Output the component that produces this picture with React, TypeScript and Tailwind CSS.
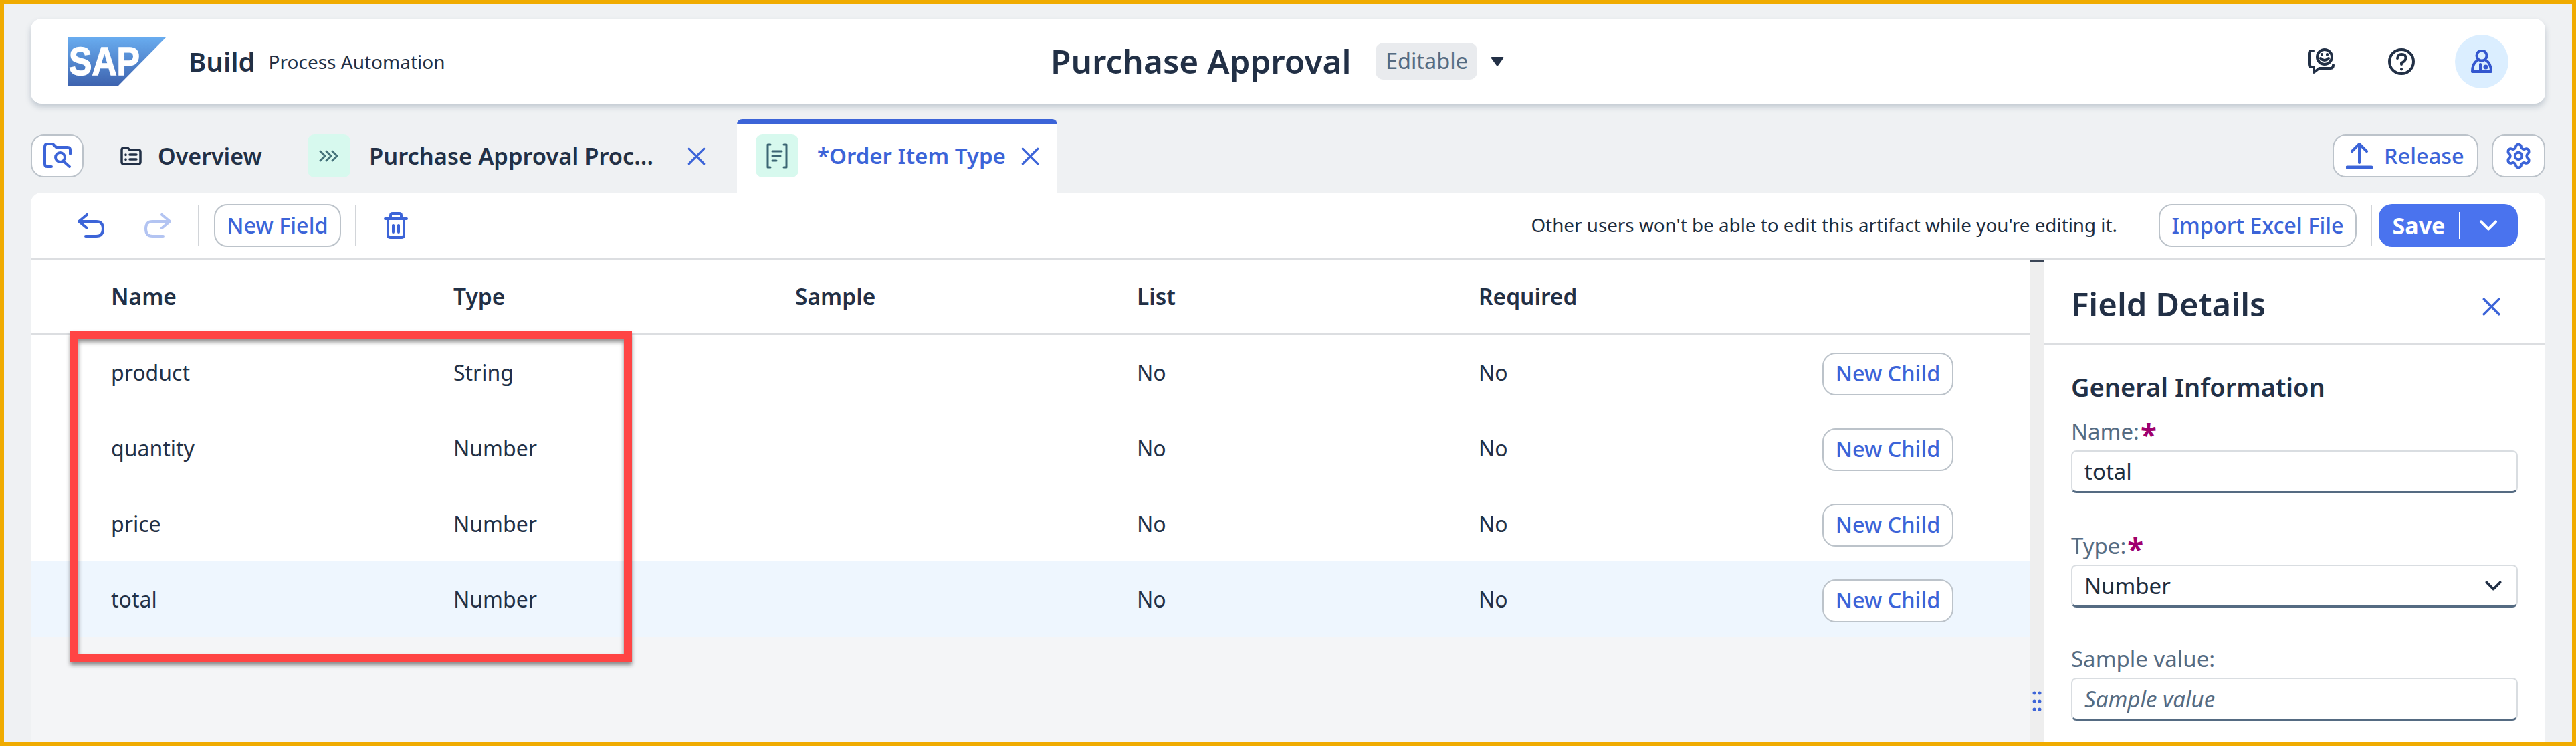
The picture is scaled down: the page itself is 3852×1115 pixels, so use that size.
import { X, ChevronDown, Settings } from 'lucide-react';
import { clsx } from 'clsx';

const rows = [
    { name: 'product', type: 'String' },
    { name: 'quantity', type: 'Number' },
    { name: 'price', type: 'Number' },
    { name: 'total', type: 'Number', selected: true },
];

const outlineBtn = "h-16 flex items-center justify-center bg-white border-2 border-[#bcc3ca] rounded-[20px] text-[#3c64d8] text-[32.500px] font-medium";
const rowGrid = "grid grid-cols-[512px_511px_511px_511px_514px_1fr] pl-[120px] items-center";

function SapLogo() {
    return (
        <svg width="148" height="74" viewBox="0 0 148 74" className="shrink-0">
            <defs>
                <linearGradient id="sapGrad" x1="0" y1="0" x2="0" y2="1">
                    <stop offset="0" stopColor="#69adf0" />
                    <stop offset="1" stopColor="#3d62ae" />
                </linearGradient>
            </defs>
            <polygon points="0,0 148,0 75,74 0,74" fill="url(#sapGrad)" />
            <text x="2" y="57" fontFamily="Liberation Sans, sans-serif" fontWeight="700" fontSize="60" fill="#fff" stroke="#fff" strokeWidth="1.500" textLength="106" lengthAdjust="spacingAndGlyphs">SAP</text>
        </svg>
    );
}

function Chip({ children }: { children: React.ReactNode }) {
    return <div className="w-16 h-16 rounded-[10px] bg-[#d7f9ee] flex items-center justify-center shrink-0">{children}</div>;
}

function Field({ label, required, children, className }: { label: string; required?: boolean; children: React.ReactNode; className?: string }) {
    return (
        <div className={className}>
            <div className="h-[36px] flex items-center text-[33px] text-[#556b82]">
                {label}
                {required && <span className="text-[#a0006e] font-bold text-[44px] leading-none mt-2 ml-0.5">*</span>}
            </div>
            <div className="mt-[10px] h-16 rounded-lg border-2 border-[#d9dde1] border-b-[3px] border-b-[#556b82] flex items-center justify-between px-[18px] text-[33px] text-[#1d2d3e]">
                {children}
            </div>
        </div>
    );
}

export default function App() {
    return (
        <div className="w-[3852px] h-[1115px] border-[6px] border-[#f0ab00] bg-[#eff1f3] px-10 pt-[22px] flex flex-col overflow-hidden relative text-[#223046]" style={{ fontFamily: '"Noto Sans", sans-serif' }}>

            {/* Shell bar */}
            <header className="h-[127px] shrink-0 bg-white rounded-2xl shadow-[0_5px_8px_rgba(85,107,130,0.3)] flex items-center pl-[55px] pr-[55px]">
                <div className="w-[1470px] shrink-0 flex items-center">
                    <SapLogo />
                    <span className="ml-[33px] text-[40px] font-semibold">Build</span>
                    <span className="ml-[20px] text-[28px]">Process Automation</span>
                </div>
                <span className="text-[49.500px] font-semibold whitespace-nowrap">Purchase Approval</span>
                <span className="ml-[37px] h-[55px] w-[152px] rounded-xl bg-[#e9ebee] text-[#556b82] text-[32.500px] flex items-center justify-center">Editable</span>
                <svg width="20" height="15" viewBox="0 0 20 15" className="ml-5"><path d="M2 1 H18 Q20 1 19 3 L11.500 13.500 Q10 15 8.500 13.500 L1 3 Q0 1 2 1 Z" fill="#223046" /></svg>
                <div className="ml-auto flex items-center">
                    <svg width="40" height="40" viewBox="0 0 40 40" fill="none" stroke="#223046" strokeWidth="4" strokeLinecap="round" strokeLinejoin="round">
                        <path d="M8 4 H5 Q2 4 2 8 V24 Q2 28 6 28 H9 V36 L17 30 H34 Q38 30 38 25" />
                        <circle cx="25" cy="13" r="11" />
                        <path d="M19 15 Q25 21 31 15" />
                        <path d="M21 9v1M29 9v1" />
                    </svg>
                    <svg width="40" height="40" viewBox="0 0 40 40" fill="none" stroke="#223046" strokeWidth="4" strokeLinecap="round" strokeLinejoin="round" className="ml-20">
                        <circle cx="20" cy="20" r="18" />
                        <path d="M14 15 Q15 9 20 9 Q27 9 26.500 15 Q26 19 20 22 V24" />
                        <path d="M20 31v.5" />
                    </svg>
                    <div className="w-20 h-20 rounded-full bg-[#dbeeff] flex items-center justify-center ml-[60px]">
                        <svg width="32" height="36" viewBox="0 0 32 36" fill="none" stroke="#3457cf" strokeWidth="4" strokeLinejoin="round" strokeLinecap="round">
                            <circle cx="16" cy="9" r="7.500" />
                            <path d="M10 16 Q2 20 2 33 H30 Q30 20 22 16" />
                            <path d="M14 22 V33" />
                            <circle cx="22" cy="26" r="1.500" fill="#3457cf" />
                        </svg>
                    </div>
                </div>
            </header>

            {/* Tab bar */}
            <div className="h-[133px] shrink-0 flex items-end">
                <div className="flex h-[87px] items-start w-full">
                    <button className="w-[79px] h-16 bg-white border-2 border-[#bcc3ca] rounded-[20px] flex items-center justify-center shrink-0">
                        <svg width="42" height="40" viewBox="0 0 42 40" fill="none" stroke="#3c64d8" strokeWidth="4" strokeLinecap="round" strokeLinejoin="round">
                            <path d="M12 36 H6 Q2 36 2 32 V6 Q2 2 6 2 H14 L19 7 H36 Q40 7 40 11 V17" />
                            <circle cx="25" cy="22" r="7" />
                            <path d="M30 28 L39 36" />
                        </svg>
                    </button>
                    <div className="ml-[55px] h-16 flex items-center shrink-0">
                        <svg width="32" height="28" viewBox="0 0 32 28" fill="none" stroke="#223046" strokeWidth="3.500" strokeLinecap="round" strokeLinejoin="round">
                            <path d="M2 5 Q2 2 5 2 H11 L14 5 H27 Q30 5 30 8 V23 Q30 26 27 26 H5 Q2 26 2 23 Z" />
                            <path d="M8 12v.5M8 19v.5M14 12H24M14 19H24" />
                        </svg>
                        <span className="ml-6 w-[156px] text-[34px] font-semibold whitespace-nowrap">Overview</span>
                    </div>
                    <div className="ml-[68px] h-16 flex items-center shrink-0">
                        <Chip>
                            <svg width="30" height="18" viewBox="0 0 30 18" fill="none" stroke="#44727a" strokeWidth="3" strokeLinecap="round" strokeLinejoin="round">
                                <path d="M2 2 L9 9 L2 16M11 2 L18 9 L11 16M20 2 L27 9 L20 16" />
                            </svg>
                        </Chip>
                        <span className="ml-[28px] w-[430px] text-[34.500px] font-semibold whitespace-nowrap">Purchase Approval Proc...</span>
                        <X size={45} strokeWidth={1.700} className="ml-[37px] text-[#3c64d8]" />
                    </div>
                    <div className="ml-[38px] -mt-[23px] h-[110px] w-[479px] bg-white border-t-8 border-[#3c64d8] rounded-t-lg pl-7 shrink-0">
                        <div className="mt-[15px] h-16 flex items-center">
                            <Chip>
                                <svg width="32" height="40" viewBox="0 0 32 40" fill="none" stroke="#3c6674" strokeWidth="3" strokeLinecap="round" strokeLinejoin="round">
                                    <path d="M6 3 H2 V37 H6M26 3 H30 V37 H26M9 13 H23M9 20 H21M9 27 H15" />
                                </svg>
                            </Chip>
                            <span className="ml-7 w-[278px] text-[33px] font-semibold text-[#3c64d8] whitespace-nowrap">*Order Item Type</span>
                            <X size={45} strokeWidth={1.700} className="ml-[18px] text-[#3c64d8]" />
                        </div>
                    </div>
                    <button className={clsx(outlineBtn, "ml-auto w-[218px] justify-start pl-[18px]")}>
                        <svg width="40" height="40" viewBox="0 0 40 40" fill="none" stroke="#3c64d8" strokeWidth="4" strokeLinecap="round" strokeLinejoin="round">
                            <path d="M20 2 V30M9 13 L20 2 L31 13" />
                            <path d="M2 37 H38" strokeWidth="5" />
                        </svg>
                        <span className="ml-[17px]">Release</span>
                    </button>
                    <button className={clsx(outlineBtn, "ml-5 w-20")}>
                        <Settings size={42} strokeWidth={2.200} />
                    </button>
                </div>
            </div>

            {/* Main panel */}
            <main className="flex-1 min-h-0 bg-white rounded-t-2xl flex flex-col">
                <div className="h-[100px] shrink-0 border-b-2 border-[#dcdee1] flex items-center pl-[70px] pr-[41px]">
                    <svg width="40" height="36" viewBox="0 0 40 36" fill="none" stroke="#3c64d8" strokeWidth="4" strokeLinecap="round" strokeLinejoin="round">
                        <path d="M14 2 L2 12 L14 22M3 12 H28 Q38 12 38 23 Q38 34 28 34 H12" />
                    </svg>
                    <svg width="40" height="36" viewBox="0 0 40 36" fill="none" stroke="#b3c4f2" strokeWidth="4" strokeLinecap="round" strokeLinejoin="round" className="ml-[60px]">
                        <path d="M26 2 L38 12 L26 22M37 12 H12 Q2 12 2 23 Q2 34 12 34 H28" />
                    </svg>
                    <div className="ml-10 w-0.5 h-[60px] bg-[#d2d5d9]" />
                    <button className={clsx(outlineBtn, "ml-[22px] w-[190px]")}>New Field</button>
                    <div className="ml-[21px] w-0.5 h-[60px] bg-[#d2d5d9]" />
                    <svg width="36" height="40" viewBox="0 0 36 40" fill="none" stroke="#3c64d8" strokeWidth="4" strokeLinecap="round" strokeLinejoin="round" className="ml-[41px]">
                        <path d="M2 10 H34M10 10 V5 Q10 2 13 2 H23 Q26 2 26 5 V10M6 10 V34 Q6 38 10 38 H26 Q30 38 30 34 V10M14 20 V30M22 20 V30" />
                    </svg>
                    <span className="ml-auto text-[27.800px] text-[#1d2d3e]">Other users won't be able to edit this artifact while you're editing it.</span>
                    <button className={clsx(outlineBtn, "ml-[62px] w-[296px]")}>Import Excel File</button>
                    <div className="ml-[21px] w-0.5 h-[60px] bg-[#d2d5d9]" />
                    <div className="ml-[10px] w-[208px] h-16 rounded-[20px] bg-[#4a73ee] flex items-center text-white text-[34px] font-bold">
                        <span className="w-[120px] text-center">Save</span>
                        <div className="w-0.5 h-10 bg-white" />
                        <ChevronDown size={44} strokeWidth={2.200} className="ml-5" />
                    </div>
                </div>

                <div className="flex-1 min-h-0 flex">
                    {/* Field table */}
                    <div className="flex-1 min-w-0 bg-[#f4f5f7] flex flex-col">
                        <div className={clsx(rowGrid, "h-[112px] shrink-0 bg-white border-b-2 border-[#dcdee1] text-[33.500px] font-semibold")}>
                            <span>Name</span>
                            <span>Type</span>
                            <span>Sample</span>
                            <span>List</span>
                            <span>Required</span>
                        </div>
                        {rows.map(row => (
                            <div key={row.name} className={clsx(rowGrid, "h-[113px] shrink-0 text-[32px]", row.selected ? "bg-[#eef6fe]" : "bg-white")}>
                                <span>{row.name}</span>
                                <span>{row.type}</span>
                                <span />
                                <span>No</span>
                                <span>No</span>
                                <button className={clsx(outlineBtn, "w-[196px] mt-1")}>New Child</button>
                            </div>
                        ))}
                    </div>

                    {/* Splitter */}
                    <div className="w-5 shrink-0 bg-[#eeeeee] flex flex-col items-center justify-between pb-[46px]">
                        <div className="w-full h-1 bg-[#3a4556]" />
                        <svg width="14" height="30" viewBox="0 0 14 30" fill="#3c64d8">
                            {[3, 15, 27].map(y => (
                                <g key={y}>
                                    <circle cx="3" cy={y} r="2.500" />
                                    <circle cx="11" cy={y} r="2.500" />
                                </g>
                            ))}
                        </svg>
                    </div>

                    {/* Details panel */}
                    <aside className="w-[750px] shrink-0 bg-white">
                        <div className="h-[127px] border-b-2 border-[#dcdee1] flex items-center justify-between pl-[41px] pr-[58px] pt-2">
                            <h2 className="text-[49px] font-semibold">Field Details</h2>
                            <X size={45} strokeWidth={1.900} className="text-[#3c64d8] mt-2" />
                        </div>
                        <div className="pl-[41px] pr-[41px]">
                            <h3 className="mt-[41px] text-[38px] leading-[44px] font-semibold">General Information</h3>
                            <Field label="Name:" required className="mt-[27px]">total</Field>
                            <Field label="Type:" required className="mt-[61px]">
                                Number
                                <ChevronDown size={41} strokeWidth={2.100} className="text-[#223046] -mr-1" />
                            </Field>
                            <Field label="Sample value:" className="mt-[59px]">
                                <span className="italic text-[#556b82]">Sample value</span>
                            </Field>
                        </div>
                    </aside>
                </div>
            </main>

            {/* Callout drawn over the screenshot */}
            <div className="absolute left-[99px] top-[488px] w-[840px] h-[495px] border-[12px] border-[#ff4444] shadow-[0_5px_6px_rgba(0,0,0,0.45),inset_0_5px_6px_rgba(0,0,0,0.45)]" />
        </div>
    );
}
